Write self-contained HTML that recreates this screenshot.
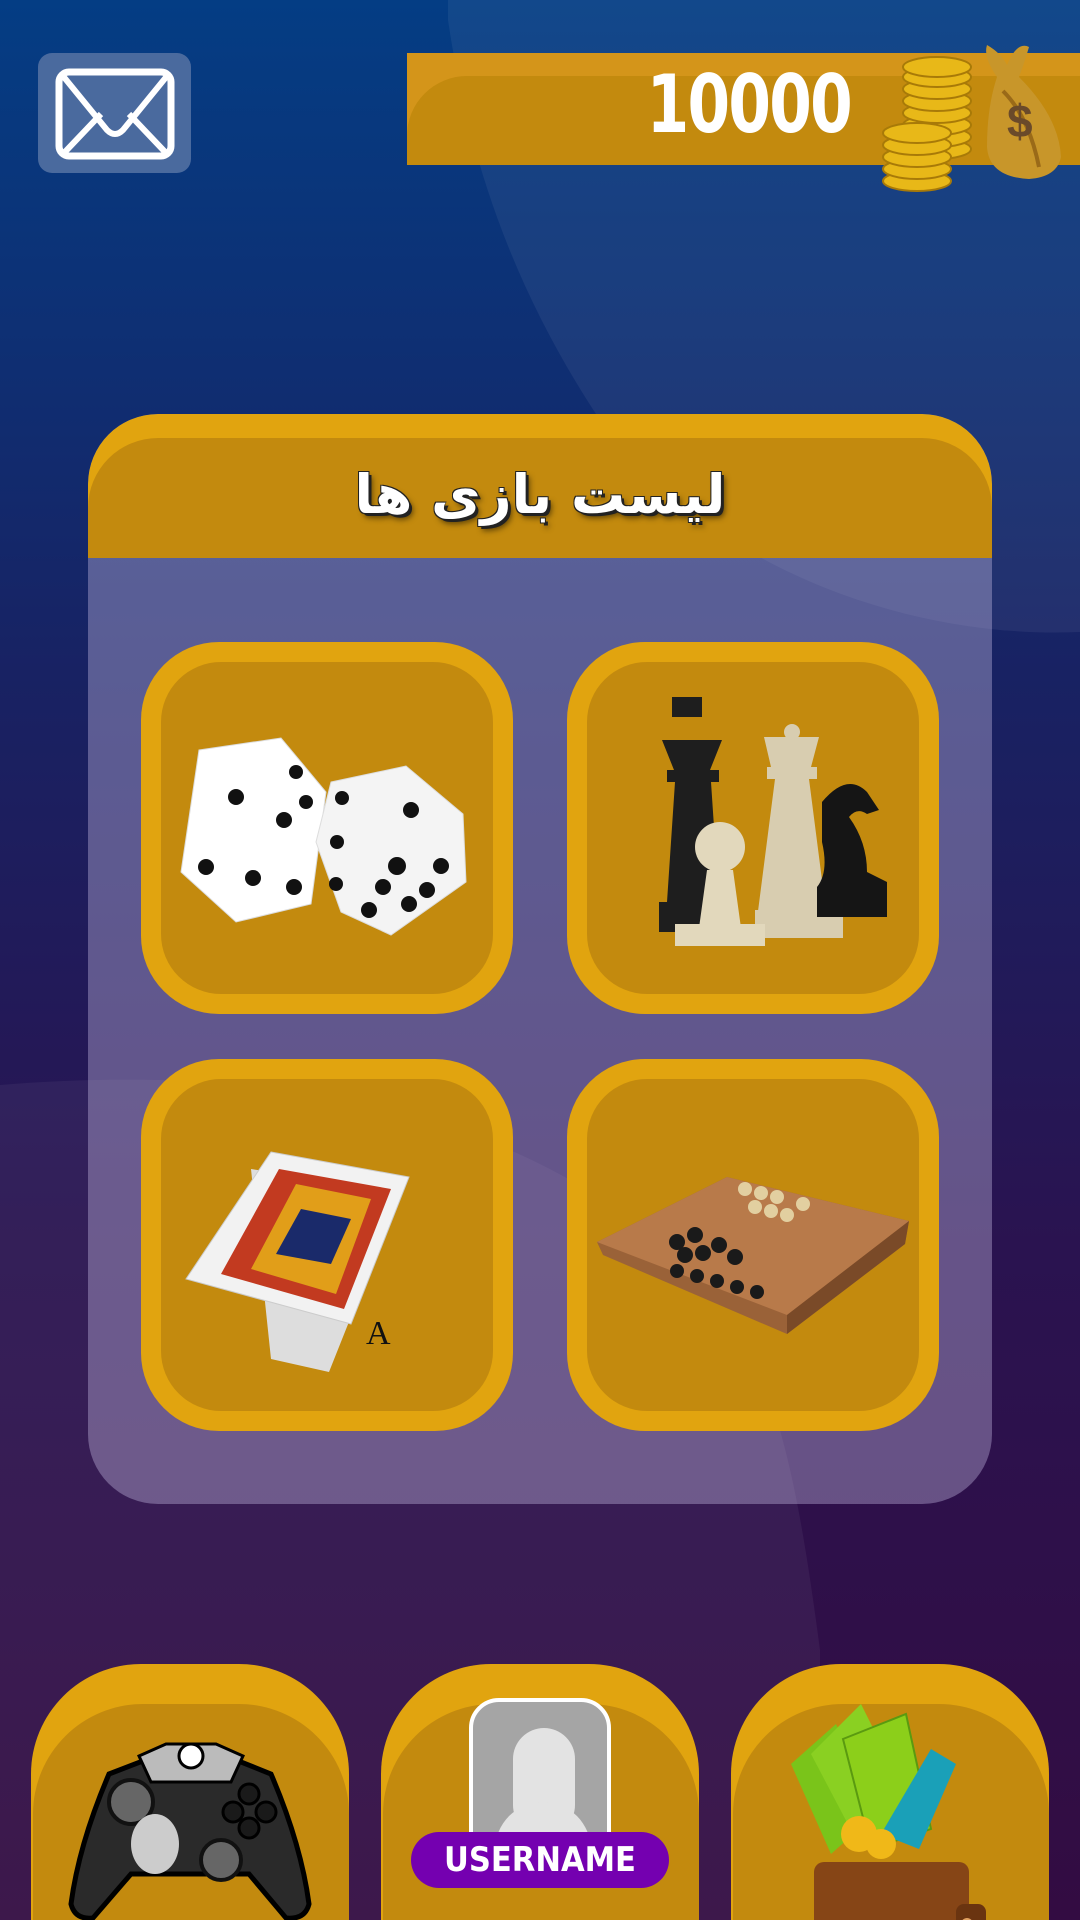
<!DOCTYPE html>
<html style="width:1080px;height:1920px;overflow:hidden;background:#330c42"><head><meta charset="utf-8"><style>
*{margin:0;padding:0;box-sizing:border-box}
body{width:1080px;height:1920px;overflow:hidden;position:relative;font-family:"Liberation Sans","Noto Sans CJK SC",sans-serif;background:linear-gradient(180deg,#043d84 0%,#182263 35%,#2a1350 65%,#330c42 100%)}
.abs{position:absolute}
.tile{position:absolute;width:372px;height:372px;background:#e1a40f;border-radius:78px}
.tile .in{position:absolute;left:20px;top:20px;right:20px;bottom:20px;background:#c38a0e;border-radius:60px}
.tile svg{position:absolute;left:0;top:0}
.btn{position:absolute;top:1664px;width:318px;height:256px;background:#e1a40f;border-radius:110px 110px 0 0;overflow:hidden}
.btn .in{position:absolute;left:2px;right:0;top:40px;bottom:0;background:#c38a0e;border-radius:110px 110px 0 0}
</style></head><body>
<svg class="abs" style="left:0;top:0" width="1080" height="1920">
<path d="M448 0 L1080 0 L1080 632 C900 640 700 560 600 420 C520 300 470 170 448 20 Z" fill="#ffffff" opacity="0.06"/>
<path d="M0 1085 C300 1060 560 1120 720 1300 C780 1380 800 1500 820 1650 L820 1920 L0 1920 Z" fill="#ffffff" opacity="0.05"/>
</svg>
<div class="abs" style="left:38px;top:53px;width:153px;height:120px;background:#4a6a9e;border-radius:14px"></div>
<svg class="abs" style="left:55px;top:68px" width="120" height="92" viewBox="0 0 120 92">
<rect x="4" y="4" width="112" height="84" rx="10" fill="none" stroke="#fff" stroke-width="7"/>
<path d="M8 8 L52 62 Q60 70 68 62 L112 8 M8 86 L46 46 M112 86 L74 46" fill="none" stroke="#fff" stroke-width="6"/>
</svg>
<div class="abs" style="left:407px;top:53px;width:673px;height:112px;background:#d4951a"></div>
<div class="abs" style="left:407px;top:76px;width:673px;height:89px;background:#c38a0e;border-radius:60px 0 0 0"></div>
<div class="abs" style="left:531px;top:60px;width:320px;text-align:right;color:#fff;font:bold 80px/90px 'DejaVu Sans Condensed','Liberation Sans Narrow',sans-serif;letter-spacing:-2px;transform:scaleX(0.85);transform-origin:right">10000</div>
<svg class="abs" style="left:879px;top:37px" width="190" height="155" viewBox="0 0 190 155">
<path d="M118 40 Q104 20 108 8 Q122 16 128 28 Q138 4 150 10 Q144 30 140 40 Q180 80 182 120 Q178 140 150 142 Q110 140 108 110 Q108 70 118 40Z" fill="#c8962a"/>
<path d="M124 54 Q150 80 160 130" stroke="#9a6a18" stroke-width="4" fill="none"/>
<text x="128" y="100" font-family="Liberation Sans" font-weight="bold" font-size="46" fill="#6a4a2a">$</text>
<g fill="#e8b818" stroke="#a87a08" stroke-width="2">
<ellipse cx="58" cy="112" rx="34" ry="10"/><ellipse cx="58" cy="100" rx="34" ry="10"/><ellipse cx="58" cy="88" rx="34" ry="10"/><ellipse cx="58" cy="76" rx="34" ry="10"/><ellipse cx="58" cy="64" rx="34" ry="10"/><ellipse cx="58" cy="52" rx="34" ry="10"/><ellipse cx="58" cy="40" rx="34" ry="10"/><ellipse cx="58" cy="30" rx="34" ry="10"/>
<ellipse cx="38" cy="144" rx="34" ry="10"/><ellipse cx="38" cy="132" rx="34" ry="10"/><ellipse cx="38" cy="120" rx="34" ry="10"/><ellipse cx="38" cy="108" rx="34" ry="10"/><ellipse cx="38" cy="96" rx="34" ry="10"/>
</g></svg>
<div class="abs" style="left:88px;top:414px;width:904px;height:1090px;background:rgba(200,190,230,0.38);border-radius:70px;overflow:hidden">
<div class="abs" style="left:0;top:0;width:904px;height:144px;background:#e1a40f;border-radius:70px 70px 0 0"></div>
<div class="abs" style="left:0;top:24px;width:904px;height:120px;background:#c38a0e;border-radius:70px 70px 0 0"></div>
</div>
<div class="abs" style="left:240px;top:445px;width:600px;text-align:center;color:#fff;font:bold 54px/100px 'DejaVu Sans','Noto Sans CJK SC',sans-serif;text-shadow:3px 3px 0 #222,-1px -1px 0 #222,1px -1px 0 #222,-1px 1px 0 #222,4px 5px 6px rgba(0,0,0,.5)" dir="rtl">لیست بازی ها</div>
<div class="tile" style="left:141px;top:642px"><div class="in"></div>
<svg width="372" height="372"><g stroke="#ddd" stroke-width="1">
<path d="M58 108 L140 96 L185 150 L170 262 L95 280 L40 230Z" fill="#fff"/>
<path d="M190 140 L265 124 L322 172 L325 240 L250 293 L200 270 L175 200Z" fill="#f4f4f4"/></g>
<g fill="#111"><circle cx="95" cy="155" r="8"/><circle cx="155" cy="130" r="7"/><circle cx="165" cy="160" r="7"/><circle cx="143" cy="178" r="8"/><circle cx="65" cy="225" r="8"/><circle cx="112" cy="236" r="8"/><circle cx="153" cy="245" r="8"/>
<circle cx="201" cy="156" r="7"/><circle cx="270" cy="168" r="8"/><circle cx="196" cy="200" r="7"/><circle cx="256" cy="224" r="9"/><circle cx="300" cy="224" r="8"/><circle cx="242" cy="245" r="8"/><circle cx="286" cy="248" r="8"/><circle cx="228" cy="268" r="8"/><circle cx="268" cy="262" r="8"/><circle cx="195" cy="242" r="7"/></g></svg></div>
<div class="tile" style="left:567px;top:642px"><div class="in"></div>
<svg width="372" height="372">
<path d="M105 55 h30 v20 h-30z M95 98 h60 l-12 30 h-36z M100 128 h52 v12 h-52z M108 140 h36 l8 120 h-52z M92 260 h68 v30 h-68z" fill="#1e1e1e"/>
<path d="M197 95 h55 l-8 30 h-40z M200 125 h50 v12 h-50z M208 137 h34 l18 140 h-70z M188 268 h88 v28 h-88z" fill="#d8cdb0"/>
<circle cx="225" cy="90" r="8" fill="#d8cdb0"/>
<path d="M255 160 Q280 130 300 150 L312 168 L300 172 Q290 165 282 175 Q300 200 300 230 L320 240 v35 h-70 v-30 Q262 230 255 200Z" fill="#151515"/>
<circle cx="153" cy="205" r="25" fill="#e2d8bc"/>
<path d="M140 228 h26 l8 58 h-42z M108 282 h90 v22 h-90z" fill="#e2d8bc"/></svg></div>
<div class="tile" style="left:141px;top:1059px"><div class="in"></div>
<svg width="372" height="372">
<path d="M110 110 L260 132 L188 313 L130 300Z" fill="#ddd"/>
<path d="M130 93 L268 118 L210 265 L45 220Z" fill="#f2f2f2" stroke="#ccc"/>
<path d="M138 110 L250 130 L203 250 L80 215Z" fill="#c23a20"/>
<path d="M155 125 L230 140 L195 235 L110 210Z" fill="#e8b818" opacity=".8"/>
<path d="M160 150 L210 160 L190 205 L135 195Z" fill="#1a2a6a"/>
<text x="225" y="285" font-family="Liberation Serif" font-size="34" fill="#111">A</text>
</svg></div>
<div class="tile" style="left:567px;top:1059px"><div class="in"></div>
<svg width="372" height="372">
<path d="M30 183 L160 118 L342 162 L338 185 L220 275 L36 196Z" fill="#9a6238"/>
<path d="M30 183 L160 118 L342 162 L220 256 Z" fill="#b87a4a"/>
<path d="M220 256 L342 162 L338 185 L220 275Z" fill="#7a4a28"/>
<g fill="#1a1a1a"><circle cx="110" cy="183" r="8"/><circle cx="128" cy="176" r="8"/><circle cx="118" cy="196" r="8"/><circle cx="136" cy="194" r="8"/><circle cx="152" cy="186" r="8"/><circle cx="168" cy="198" r="8"/><circle cx="110" cy="212" r="7"/><circle cx="130" cy="217" r="7"/><circle cx="150" cy="222" r="7"/><circle cx="170" cy="228" r="7"/><circle cx="190" cy="233" r="7"/></g>
<g fill="#e2cfa0"><circle cx="178" cy="130" r="7"/><circle cx="194" cy="134" r="7"/><circle cx="210" cy="138" r="7"/><circle cx="188" cy="148" r="7"/><circle cx="204" cy="152" r="7"/><circle cx="220" cy="156" r="7"/><circle cx="236" cy="145" r="7"/></g></svg></div>
<div class="btn" style="left:31px"><div class="in"></div>
<svg width="318" height="256" style="position:absolute;left:0;top:0">
<path d="M78 110 L130 90 L190 90 L240 110 Q270 180 278 240 Q274 256 255 254 L218 210 L100 210 L62 254 Q44 256 40 240 Q48 180 78 110Z" fill="#2a2a2a" stroke="#000" stroke-width="5"/>
<path d="M108 92 L135 80 L185 80 L212 92 L200 118 L120 118Z" fill="#bbb" stroke="#000" stroke-width="3"/>
<circle cx="160" cy="92" r="12" fill="#fff" stroke="#000" stroke-width="3"/>
<circle cx="100" cy="138" r="22" fill="#666" stroke="#111" stroke-width="4"/>
<ellipse cx="124" cy="180" rx="24" ry="30" fill="#ccc"/>
<circle cx="190" cy="196" r="20" fill="#666" stroke="#111" stroke-width="4"/>
<g fill="#1a1a1a" stroke="#000" stroke-width="3"><circle cx="218" cy="130" r="10"/><circle cx="235" cy="148" r="10"/><circle cx="218" cy="164" r="10"/><circle cx="202" cy="148" r="10"/></g></svg></div>
<div class="btn" style="left:381px"><div class="in"></div>
<div class="abs" style="left:88px;top:34px;width:142px;height:160px;background:#a5a5a5;border:4px solid #fff;border-radius:30px 30px 0 0;overflow:hidden">
<div class="abs" style="left:40px;top:26px;width:62px;height:108px;background:#e3e3e3;border-radius:31px"></div>
<div class="abs" style="left:22px;top:100px;width:96px;height:80px;background:#e3e3e3;border-radius:50px 50px 0 0"></div></div>
<div class="abs" style="left:30px;top:168px;width:258px;height:56px;background:#7400b0;border-radius:28px;color:#fff;text-align:center;font:bold 34px/56px 'DejaVu Sans Condensed','Liberation Sans Narrow',sans-serif">USERNAME</div></div>
<div class="btn" style="left:731px"><div class="in"></div>
<svg width="318" height="256" style="position:absolute;left:0;top:0">
<path d="M60 100 L105 60 L145 150 L100 190Z" fill="#7ac41a"/>
<path d="M80 90 L130 40 L180 140 L130 185Z" fill="#8ad022"/>
<path d="M112 75 L175 50 L200 165 L140 185Z" fill="#8ccf1a" stroke="#5a9a10" stroke-width="2"/>
<path d="M150 170 L200 85 L225 100 L188 185Z" fill="#1aa0b8"/>
<circle cx="128" cy="170" r="18" fill="#f0b818"/><circle cx="150" cy="180" r="15" fill="#f0b818"/>
<rect x="83" y="198" width="155" height="120" rx="10" fill="#864516"/>
<rect x="225" y="240" width="30" height="40" rx="8" fill="#6a3410"/><circle cx="236" cy="260" r="6" fill="#e0a060"/></svg></div>
</body></html>
